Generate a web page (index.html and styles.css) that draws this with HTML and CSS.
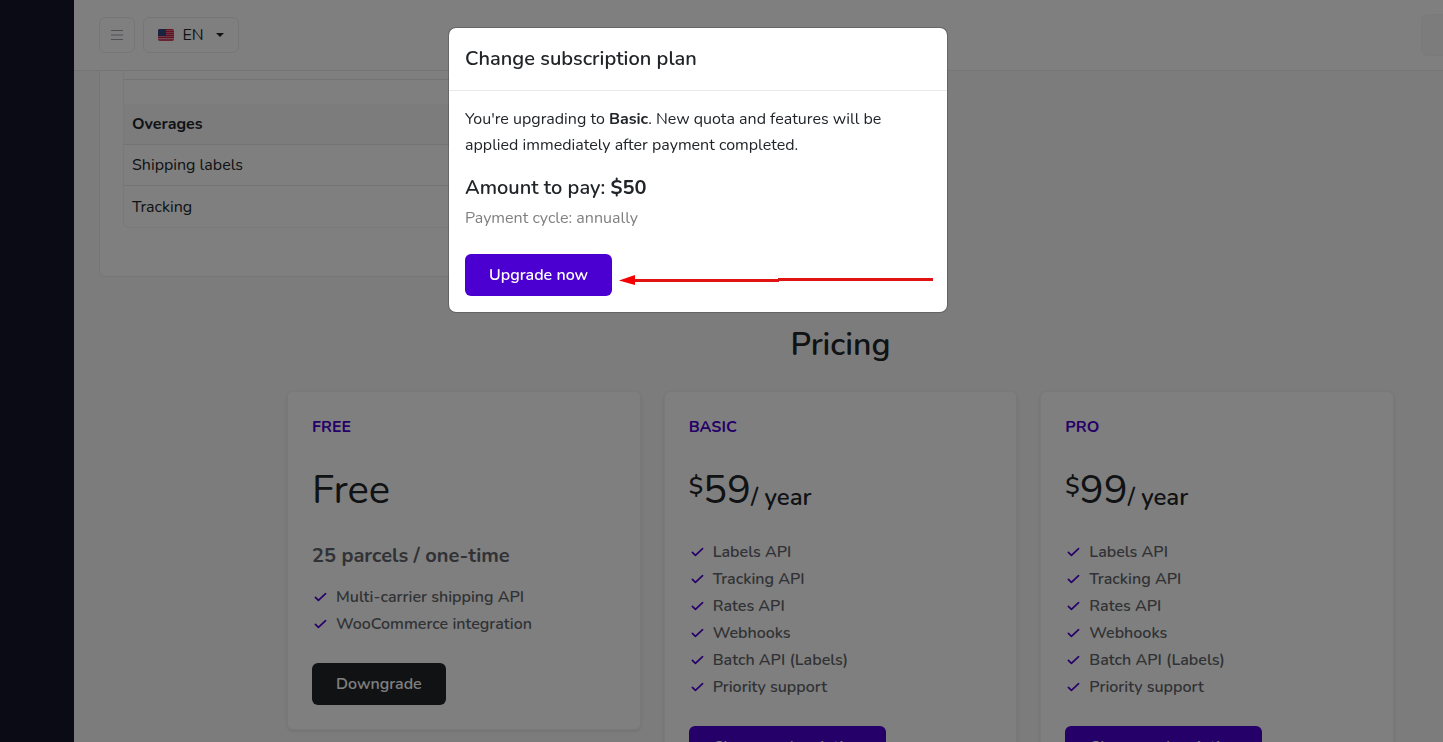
FILE: index.html
```
<!DOCTYPE html>
<html lang="en">
<head>
    <meta charset="UTF-8">
    <title>Subscription</title>
    <link rel="stylesheet" href="styles.css">
</head>
<body>
    <svg width="0" height="0" class="sprite">
        <symbol id="check" viewBox="0 0 16 16">
            <path d="M3.4 7.4l3 2.9 7.2-6.6" fill="none" stroke="currentColor" stroke-width="1.7" stroke-linecap="round" stroke-linejoin="round"/>
        </symbol>
    </svg>

    <div class="app">
        <aside class="sidebar"></aside>

        <div class="main">
            <!-- Top bar -->
            <header class="topbar">
                <button class="icon-btn" aria-label="Toggle menu">
                    <svg width="14" height="12" viewBox="0 0 14 12" stroke="#a0a3aa" stroke-width="1">
                        <path d="M1 1.5h12M1 6h12M1 10.5h12"/>
                    </svg>
                </button>
                <button class="lang-btn">
                    <svg width="16" height="12" viewBox="0 0 16 12">
                        <defs><clipPath id="flag"><rect width="16" height="12" rx="2"/></clipPath></defs>
                        <g clip-path="url(#flag)">
                            <rect width="16" height="12" fill="#efc4cd"/>
                            <path d="M0 .5h16M0 2.5h16M0 4.5h16M0 6.5h16M0 8.5h16M0 11h16" stroke="#c81f45" stroke-width="1.3"/>
                            <rect width="8" height="7" fill="#33447e"/>
                        </g>
                    </svg>
                    <span>EN</span>
                    <i class="caret"></i>
                </button>
                <button class="account-btn" aria-label="Account"></button>
            </header>

            <div class="content">
                <!-- Current usage -->
                <div class="usage-card">
                    <table class="usage-table">
                        <tbody>
                            <tr class="row-end"><td></td></tr>
                            <tr class="row-gap"><td></td></tr>
                            <tr><th>Overages</th></tr>
                            <tr><td>Shipping labels</td></tr>
                            <tr><td>Tracking</td></tr>
                        </tbody>
                    </table>
                </div>

                <!-- Plans -->
                <section class="pricing">
                    <h2>Pricing</h2>
                    <div class="plans">
                        <div class="plan">
                            <h6>Free</h6>
                            <div class="price">Free</div>
                            <h4>25 parcels / one-time</h4>
                            <ul>
                                <li><svg><use href="#check"/></svg>Multi-carrier shipping API</li>
                                <li><svg><use href="#check"/></svg>WooCommerce integration</li>
                            </ul>
                            <button class="btn btn-dark">Downgrade</button>
                        </div>

                        <div class="plan">
                            <h6>Basic</h6>
                            <div class="price"><span class="currency">$</span>59<span class="cycle">/ year</span></div>
                            <ul>
                                <li><svg><use href="#check"/></svg>Labels API</li>
                                <li><svg><use href="#check"/></svg>Tracking API</li>
                                <li><svg><use href="#check"/></svg>Rates API</li>
                                <li><svg><use href="#check"/></svg>Webhooks</li>
                                <li><svg><use href="#check"/></svg>Batch API (Labels)</li>
                                <li><svg><use href="#check"/></svg>Priority support</li>
                            </ul>
                            <button class="btn">Change subscription</button>
                        </div>

                        <div class="plan">
                            <h6>Pro</h6>
                            <div class="price"><span class="currency">$</span>99<span class="cycle">/ year</span></div>
                            <ul>
                                <li><svg><use href="#check"/></svg>Labels API</li>
                                <li><svg><use href="#check"/></svg>Tracking API</li>
                                <li><svg><use href="#check"/></svg>Rates API</li>
                                <li><svg><use href="#check"/></svg>Webhooks</li>
                                <li><svg><use href="#check"/></svg>Batch API (Labels)</li>
                                <li><svg><use href="#check"/></svg>Priority support</li>
                            </ul>
                            <button class="btn">Change subscription</button>
                        </div>
                    </div>
                </section>
            </div>
        </div>
    </div>

    <!-- Modal -->
    <div class="backdrop">
        <div class="modal" role="dialog" aria-labelledby="modalTitle">
            <div class="modal-header">
                <h5 id="modalTitle">Change subscription plan</h5>
            </div>
            <div class="modal-body">
                <p>You're upgrading to <b>Basic</b>. New quota and features will be applied immediately after payment completed.</p>
                <h5>Amount to pay: <b>$50</b></h5>
                <div class="muted">Payment cycle: annually</div>
                <button class="btn">Upgrade now</button>
                <svg class="arrow" width="314" height="12" viewBox="0 0 314 12">
                    <path d="M14 6.5H160M159 5.5H314" stroke="#e01212" stroke-width="3"/>
                    <path d="M0 6.5L16 1v10z" fill="#f50000"/>
                </svg>
            </div>
        </div>
    </div>
</body>
</html>
```

FILE: styles.css
```
* {
    box-sizing: border-box;
}
body {
    margin: 0;
    height: 100vh;
    overflow: hidden;
    background: #f8f8f9;
    color: #212529;
    font-family: Nunito, "Open Sans", sans-serif;
    font-size: 16px;
    line-height: 26px;
}
h2, h4, h5, h6, p, ul {
    margin: 0;
    padding: 0;
}
b {
    font-weight: 700;
}
button {
    font-family: inherit;
    font-size: 16px;
    cursor: pointer;
}
.sprite {
    position: absolute;
}
.app {
    display: flex;
    height: 100vh;
}
.sidebar {
    width: 74px;
    flex: none;
    background: #17172b;
}
.main {
    flex: 1;
    min-width: 0;
    display: flex;
    flex-direction: column;
}

/* top bar */
.topbar {
    flex: none;
    display: flex;
    align-items: center;
    gap: 8px;
    height: 71px;
    padding-left: 25px;
    background: #fff;
    border-bottom: 1px solid #ebebee;
}
.icon-btn, .lang-btn {
    display: flex;
    align-items: center;
    justify-content: center;
    height: 36px;
    background: #fff;
    border: 1px solid #ececef;
    border-radius: 6px;
    color: #212529;
}
.icon-btn {
    width: 36px;
    padding: 0;
}
.lang-btn {
    width: 96px;
    padding: 0;
    gap: 8px;
}
.caret {
    margin-left: 4px;
    border: 4px solid transparent;
    border-top-color: #212529;
    border-bottom: 0;
}
.account-btn {
    width: 22px;
    height: 42px;
    margin-left: auto;
    background: #f8f8f9;
    border: 1px solid #f5f5f7;
    border-right: 0;
    border-radius: 6px 0 0 6px;
}

/* page */
.content {
    flex: 1;
    overflow: hidden;
    padding: 0 49px 0 25px;
}
.usage-card {
    width: 60%;
    padding: 0 23px 48px;
    background: #fff;
    border: 1px solid #ececef;
    border-top: 0;
    border-radius: 0 0 6px 6px;
}
.usage-table {
    width: 100%;
    border-spacing: 0;
    border: 1px solid #f2f2f4;
    border-top: 0;
    border-radius: 0 0 6px 6px;
}
.usage-table td, .usage-table th {
    height: 41px;
    padding: 0 8px;
    text-align: left;
    border-bottom: 1px solid #e9e9ec;
}
.usage-table th {
    background: #f8f8f9;
    font-weight: 700;
}
.usage-table tr:last-child td {
    border-bottom: 0;
}
.usage-table .row-end td {
    height: 9px;
}
.usage-table .row-gap td {
    height: 24px;
    border-bottom: 0;
}

/* pricing */
.pricing {
    margin: 49px 0 0 188px;
}
.pricing h2 {
    margin-bottom: 27px;
    font-size: 32px;
    line-height: 38px;
    font-weight: 600;
    text-align: center;
}
.plans {
    display: grid;
    grid-template-columns: repeat(3, 1fr);
    gap: 23px;
    align-items: start;
}
.plan {
    padding: 24px;
    background: #fff;
    border: 1px solid #f2f2f4;
    border-radius: 6px;
    box-shadow: 0 1px 3px rgba(0, 0, 0, 0.1);
}
.plan h6 {
    margin-bottom: 28px;
    color: #4b00d1;
    font-size: 16px;
    line-height: 22px;
    font-weight: 700;
    text-transform: uppercase;
}
.price {
    height: 48px;
    font-size: 40px;
    line-height: 48px;
    display: flex;
}
.currency, .cycle {
    font-size: 24px;
    font-weight: 600;
}
.currency {
    line-height: 40px;
}
.cycle {
    line-height: 62px;
}
.plan h4 {
    margin-top: 30px;
    color: #62656a;
    font-size: 20px;
    line-height: 24px;
    font-weight: 700;
}
.plan ul {
    margin: 25px 0;
    list-style: none;
    color: #62656a;
    font-weight: 600;
}
.plan h4 + ul {
    margin-top: 16px;
}
.plan li {
    display: flex;
    align-items: center;
    gap: 8px;
    line-height: 27px;
}
.plan li svg {
    width: 16px;
    height: 16px;
    color: #4b00d1;
}

.btn {
    display: block;
    height: 42px;
    padding: 0 24px;
    border: 0;
    border-radius: 6px;
    background: #4b00d1;
    color: #fff;
    font-weight: 600;
}
.btn-dark {
    background: #212529;
}

/* modal */
.backdrop {
    position: fixed;
    inset: 0;
    padding: 27px 47px 0 0;
    background: rgba(0, 0, 0, 0.5);
}
.modal {
    width: 500px;
    margin: 0 auto;
    background: #fff;
    background-clip: padding-box;
    border: 1px solid rgba(0, 0, 0, 0.2);
    border-radius: 8px;
}
.modal h5 {
    font-size: 20px;
    font-weight: 600;
    line-height: 24px;
}
.modal-header {
    padding: 19px 16px;
    border-bottom: 1px solid #e9e9ec;
}
.modal-body {
    position: relative;
    padding: 15px 16px 16px;
}
.modal-body p {
    margin-bottom: 18px;
}
.muted {
    margin: 5px 0 23px;
    color: #808080;
}
.arrow {
    position: absolute;
    right: 14px;
    bottom: 26px;
}
```
